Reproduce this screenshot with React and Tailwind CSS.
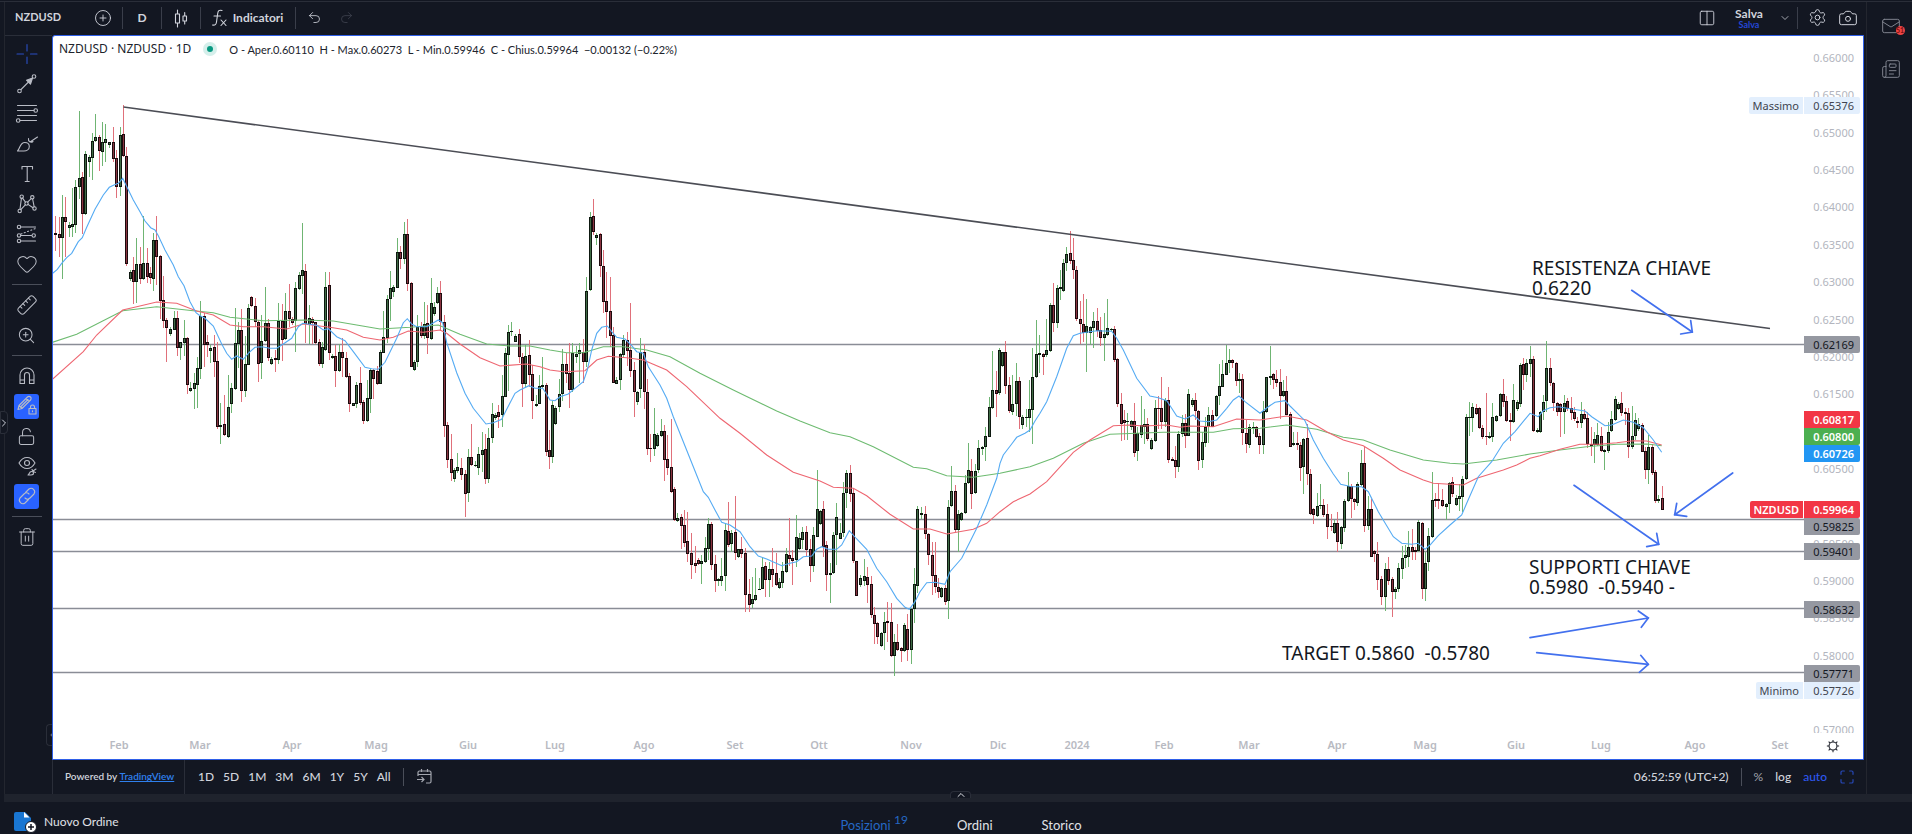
import React from 'react';
import { Heart, ZoomIn, Ruler, LockOpen, Trash2, Undo2, Redo2, Settings, Camera, ChevronDown, ChevronUp, ChevronRight, ChevronLeft, Maximize, Mail, Newspaper, Columns2, CirclePlus } from 'lucide-react';

// plot size in px, everything on the canvas is placed relative to it
const W = 1810;
const H = 723;

// each block: origin on the plot, then candles as "dir x high top bottom low" in thirds of a pixel
const BLOCKS = [
  {
    x: -3, y: 54,
    candles: `r 17 378 428 434 484;r 27 380 432 444 500;g 37 315 382 444 568;r 47 320 382 395 500;g 57 395 405 413 440;g 67 295 402 412 440;g 77 270 290 405 430;g 87 62 264 292 328;r 97 245 262 371 432;g 107 183 192 371 375;g 117 195 201 215 260;g 127 130 152 203 270;g 137 72 140 152 155;r 147 136 140 183 242;g 157 97 155 185 228;g 167 102 147 158 217;g 178 155 157 165 175;r 190 112 157 207 217;r 200 180 204 291 325;g 210 112 135 291 317;r 220 45 132 197 200;r 230 172 197 522 528;g 240 540 545 568 572;r 250 500 540 575 643;g 260 445 522 575 640;r 270 470 521 567 583;g 281 378 519 567 570;r 291 475 519 560 580;r 301 530 550 565 582;g 311 430 450 567 602;r 320 378 450 502 585;r 330 494 499 632 687;r 340 557 629 692 714;r 350 685 690 714 815;g 362 710 716 733 738;g 372 662 685 719 720;r 382 662 685 773 797;g 392 755 757 773 809;g 402 690 745 760 797;r 412 740 745 886 912;g 422 875 895 903 905;g 432 850 880 897 957;g 442 800 833 884 953;g 452 632 678 836 866;r 462 670 678 766 830;r 472 735 755 765 800;g 482 765 773 783 818;r 492 735 772 815 862;r 502 755 812 1010 1018;g 512 940 1006 1011 1062;r 523 915 1003 1035 1038;g 535 855 950 1041 1043;g 545 880 893 941 970;g 555 655 760 896 900;g 565 697 720 762 835;r 575 657 720 903 937;g 585 738 822 903 922;g 595 643 653 824 826;r 605 618 622 647 650;r 615 623 647 697 712;r 625 690 697 822 876;g 635 674 753 819 866;g 645 590 700 753 755;r 655 688 700 805 812;g 665 800 807 821 825;r 676 780 803 810 845;g 686 640 692 810 822;r 696 641 692 750 812;g 706 610 662 748 750;r 717 583 662 688 712;r 727 680 686 700 705;g 737 576 595 692 785;g 747 545 555 597 600;g 757 400 540 557 612;r 767 521 543 703 760;g 777 645 685 704 762;r 787 680 686 700 762;r 797 695 697 760 762;r 807 748 756 823 828;g 817 756 770 823 835;g 827 546 590 780 783;r 837 546 585 788 810;g 847 792 797 805 808;r 857 765 797 842 890;g 867 762 786 842 845;r 877 745 785 805 862;r 889 785 803 860 863;r 899 848 857 942 967;g 909 938 940 948 948;g 920 875 884 942 955;r 930 830 880 939 945;r 941 930 936 993 1002;g 951 870 924 993 995;g 961 835 840 926 970;r 971 837 840 868 928;r 981 828 842 882 885;g 991 780 787 882 883;g 1001 662 740 789 790;g 1011 615 628 744 760;g 1021 543 594 628 694;g 1031 585 590 606 620;g 1041 445 485 593 595;r 1051 468 485 508 537;g 1063 396 432 508 523;r 1072 387 432 582 602;r 1083 575 580 830 832;g 1093 810 815 840 842;g 1103 675 711 815 832;r 1113 695 711 737 745;g 1123 637 703 737 748;r 1133 645 700 745 793;g 1143 565 638 747 750;g 1153 635 652 672 678;g 1163 592 610 640 642;r 1172 572 610 697 722;r 1183 675 695 1007 1040;r 1193 995 1005 1110 1135;r 1203 1033 1107 1148 1172;g 1213 1135 1140 1168 1175;g 1223 1090 1132 1142 1150;r 1235 1105 1133 1155 1170;r 1246 1140 1153 1212 1281;g 1256 1078 1102 1210 1237;r 1265 1003 1102 1124 1128;g 1275 1112 1125 1128 1130;g 1286 1072 1092 1133 1155;g 1296 1025 1080 1095 1145;r 1306 1033 1077 1167 1182;g 1316 1015 1045 1167 1180;g 1326 938 973 1045 1060;g 1336 970 975 985 990;r 1346 945 965 980 1013;g 1356 855 918 975 1012;g 1366 775 790 920 922;g 1376 705 727 794 902;g 1385 696 723 727 737;g 1395 733 737 755 757;r 1408 718 733 802 820;r 1418 790 801 881 950;g 1427 765 797 881 895;r 1438 750 795 855 890;r 1448 825 853 934 988;g 1458 915 943 948 950;g 1468 855 887 942 943;g 1478 800 884 890 893;r 1488 880 885 1085 1097;r 1498 1020 1080 1102 1137`,
    fast: '8,550 22,538 35,520 50,503 65,490 85,455 97,443 110,412 135,358 160,315 178,292 192,285 205,280 218,265 232,293 250,330 270,365 285,393 302,413 315,420 325,437 345,480 370,525 385,560 402,587 420,635 438,668 450,677 465,685 490,708 515,762 530,790 545,808 560,798 580,808 597,788 615,772 635,770 660,775 680,775 700,762 725,745 745,710 758,700 772,702 800,706 820,720 835,716 860,740 885,752 910,785 945,832 965,836 985,838 1005,817 1040,745 1060,698 1072,686 1085,702 1100,710 1130,710 1165,690 1178,698 1190,758 1220,848 1245,910 1270,955 1308,1002 1330,998 1355,988 1370,958 1395,910 1410,900 1437,887 1455,895 1478,895 1488,910 1500,930',
    mid: '8,867 100,785 140,735 218,660 260,650 320,636 380,640 440,663 490,675 540,705 580,710 640,710 710,717 760,702 840,712 890,720 940,742 990,750 1030,742 1075,723 1120,727 1170,720 1190,730 1230,762 1290,803 1350,828 1430,822 1470,830 1500,840',
    slow: '8,757 80,733 218,662 320,650 430,662 490,668 540,682 640,692 760,690 850,693 920,705 990,717 1080,712 1165,705 1230,733 1310,762 1380,768 1440,768 1500,780',
  },
  {
    x: 447, y: 144,
    candles: `g 158 662 676 830 848;g 167 677 684 732 735;g 178 598 642 680 697;g 188 507 552 642 662;r 198 518 552 582 608;r 208 488 580 630 685;g 218 488 518 630 635;g 229 498 522 530 550;g 239 490 510 523 610;r 250 478 515 545 608;g 260 290 333 545 562;g 271 97 110 330 332;r 281 58 108 156 165;g 290 158 166 174 195;r 300 158 162 258 290;r 310 210 257 365 400;r 320 275 362 395 475;r 330 290 392 467 500;r 340 440 465 609 610;g 350 590 600 611 613;g 361 518 522 601 630;g 371 465 480 525 530;r 381 455 481 514 558;r 391 368 510 573 590;r 403 547 570 636 711;g 412 632 636 665 675;g 422 475 517 628 655;r 432 492 517 637 687;r 442 598 636 808 825;r 452 762 804 808 846;g 463 683 763 808 827;g 473 760 765 797 800;g 483 718 752 769 772;r 493 734 752 840 902;r 503 765 837 863 886;r 513 716 860 936 940;r 523 922 927 1020 1022;g 533 1000 1014 1022 1025;r 543 1002 1011 1038 1107;r 553 990 1034 1088 1100;r 563 995 1083 1122 1145;r 575 1060 1118 1155 1198;r 585 1097 1150 1158 1180;r 595 1135 1140 1152 1155;g 605 1125 1143 1153 1213;g 616 1070 1105 1145 1148;g 626 1015 1033 1108 1140;r 635 1025 1033 1155 1170;r 645 1125 1152 1202 1235;g 655 1195 1198 1203 1218;g 665 1135 1187 1202 1218;g 675 1030 1050 1188 1232;r 685 967 1052 1096 1100;g 695 1050 1060 1093 1115;r 705 947 1057 1118 1140;g 715 1107 1107 1132 1135;r 725 1070 1106 1121 1135;r 735 1105 1118 1245 1295;r 747 1197 1243 1274 1296;g 757 1190 1258 1272 1285;g 767 1165 1245 1260 1262;g 778 1195 1226 1228 1230;g 788 1130 1161 1227 1228;r 797 1145 1158 1201 1250;g 808 1145 1166 1200 1250;r 818 1105 1167 1184 1220;r 828 1120 1180 1215 1218;g 838 1195 1205 1225 1228;g 848 1145 1172 1208 1225;g 858 1105 1122 1176 1178;r 868 1015 1124 1136 1158;r 878 1110 1133 1142 1216;g 888 1005 1072 1140 1162;g 898 1060 1074 1107 1110;g 908 1040 1056 1080 1108;r 920 1038 1056 1110 1130;r 931 1078 1107 1158 1205;g 941 1040 1066 1158 1175;g 951 870 988 1070 1072;g 960 990 993 1033 1035;r 970 962 987 1100 1130;r 980 1082 1095 1185 1233;g 990 1150 1180 1184 1270;g 1000 1055 1064 1180 1182;g 1010 970 1011 1065 1155;g 1020 1030 1058 1077 1078;g 1030 905 938 1058 1072;g 1040 870 878 940 985;r 1050 855 880 942 965;r 1060 925 940 1144 1148;r 1070 1142 1144 1247 1248;g 1081 1185 1195 1216 1220;g 1093 1138 1188 1203 1218;r 1103 1160 1190 1216 1270;r 1113 1187 1213 1305 1313;r 1123 1280 1305 1332 1392;r 1133 1325 1330 1370 1392;g 1143 1355 1360 1397 1400;g 1153 1295 1325 1360 1410;r 1162 1265 1323 1328 1385;r 1173 1270 1325 1428 1430;g 1183 1362 1387 1428 1488;r 1193 1332 1387 1410 1414;r 1203 1400 1405 1413 1447;g 1213 1330 1335 1413 1415;r 1222 1302 1347 1411 1442;g 1233 1285 1288 1411 1452;g 1243 1165 1213 1288 1330;g 1253 978 987 1217 1240;g 1264 980 1000 1004 1017;r 1275 978 1002 1063 1078;r 1286 1058 1062 1126 1155;r 1296 1085 1125 1188 1245;r 1306 1085 1186 1222 1238;r 1316 1195 1220 1235 1255;g 1325 1220 1225 1250 1255;r 1335 1215 1225 1265 1275;g 1345 960 980 1264 1318;g 1355 858 933 978 980;r 1366 915 933 1050 1055;g 1376 990 1003 1050 1115;g 1385 995 1000 1020 1023;g 1395 885 908 1000 1002;g 1405 788 870 908 912;r 1415 838 873 941 987;g 1425 853 873 940 942;g 1436 780 803 870 880;g 1447 797 800 808 825;g 1457 742 768 802 842;g 1467 650 682 770 772;g 1478 513 630 684 686;r 1488 572 631 641 711;g 1498 505 510 640 645`,
    fast: '150,660 165,662 180,650 205,642 225,625 250,605 262,570 275,510 290,460 305,442 322,438 335,455 350,472 375,477 395,497 410,515 430,520 445,560 480,615 500,655 520,710 550,785 580,860 610,935 625,952 645,990 665,1027 690,1035 720,1055 750,1100 775,1128 800,1137 845,1157 870,1150 890,1145 910,1130 935,1128 950,1108 965,1100 985,1108 1010,1108 1025,1095 1048,1052 1070,1077 1100,1108 1130,1165 1160,1205 1190,1255 1215,1282 1228,1288 1245,1265 1260,1235 1280,1208 1305,1207 1335,1213 1350,1175 1385,1135 1410,1085 1430,1045 1460,975 1490,895 1500,850',
    mid: '150,570 190,575 255,572 290,540 325,529 380,533 430,540 500,570 560,620 660,715 720,760 800,825 880,877 960,903 1000,922 1060,925 1100,947 1170,1003 1240,1047 1290,1047 1340,1062 1420,1048 1460,1030 1500,995',
    slow: '150,510 200,518 250,518 310,500 370,500 440,510 510,530 600,580 700,630 830,693 900,723 990,758 1050,770 1120,800 1240,862 1280,866 1340,887 1420,892 1500,880',
  },
  {
    x: 897, y: 184,
    candles: `g 157 395 397 437 440;r 167 363 396 497 522;r 178 470 494 572 578;g 188 465 551 575 585;g 198 430 483 553 588;r 208 470 484 591 628;g 218 585 592 614 627;g 228 567 592 594 622;g 238 480 568 593 635;g 248 383 471 570 672;g 258 300 402 472 475;g 269 345 398 404 460;r 280 398 401 412 465;g 290 298 391 405 410;g 300 250 255 392 395;r 311 190 256 308 335;g 321 195 205 308 325;g 331 150 202 206 240;g 341 118 128 214 216;g 350 82 101 130 152;r 361 33 100 122 133;r 371 55 120 150 177;r 380 137 150 298 302;r 391 242 296 313 372;r 401 222 311 340 365;g 410 237 318 340 455;g 420 318 322 340 375;g 431 277 303 323 385;r 442 263 303 332 350;r 452 290 330 355 377;g 463 280 342 355 422;g 473 237 325 345 348;g 483 323 327 331 333;r 493 318 328 420 425;r 503 415 418 552 560;r 513 520 551 612 662;r 523 570 600 610 660;g 533 578 602 606 660;g 543 600 604 622 630;r 554 550 603 698 710;g 563 622 640 694 722;g 573 528 616 644 655;g 584 567 612 620 672;r 593 595 613 658 662;g 603 655 660 688 690;g 616 540 564 662 667;r 626 527 563 567 627;r 635 472 565 606 628;g 646 535 541 605 622;r 656 500 540 719 730;r 666 712 716 722 722;r 676 678 721 740 775;g 686 632 641 740 755;g 696 585 610 642 650;r 706 583 610 647 685;g 716 506 522 647 648;g 726 535 541 555 560;r 736 520 540 573 600;r 746 570 572 722 750;g 756 635 665 720 745;g 766 592 622 668 682;g 776 560 584 622 668;r 786 570 586 620 622;g 798 525 529 588 592;g 808 433 499 528 555;g 818 420 462 500 502;g 828 375 428 464 465;g 838 387 420 430 460;r 848 417 420 430 443;r 858 425 428 482 497;g 868 460 477 482 520;r 878 463 477 640 675;r 889 600 638 673 700;g 899 612 622 675 685;g 909 607 621 625 642;r 919 618 620 650 655;r 929 640 648 676 702;g 939 543 574 674 703;g 949 470 472 575 578;g 961 377 468 473 495;r 970 458 462 480 507;r 980 450 478 488 502;r 991 448 485 527 598;g 1001 480 512 527 530;r 1010 467 513 584 586;r 1021 577 583 680 682;g 1031 635 668 675 678;r 1041 635 669 675 690;r 1051 665 674 744 782;g 1061 655 656 742 822;r 1071 612 654 763 795;r 1081 747 761 882 885;r 1091 865 868 886 912;g 1101 820 857 888 890;g 1111 792 855 858 868;r 1121 838 854 884 890;r 1132 852 881 920 957;r 1143 882 917 922 932;g 1153 900 908 940 943;r 1163 877 908 966 995;g 1173 918 922 973 987;g 1184 838 843 924 935;g 1194 757 798 843 846;r 1204 793 798 836 893;r 1214 835 837 847 870;g 1223 785 792 848 858;g 1233 690 730 795 797;r 1244 680 730 918 937;g 1254 828 867 918 930;r 1264 838 868 1010 1012;r 1274 990 994 1002 1025;r 1283 965 1001 1080 1110;r 1293 1068 1078 1132 1155;g 1307 1030 1047 1132 1172;r 1316 1012 1048 1082 1095;r 1326 1070 1078 1115 1190;g 1336 1100 1106 1117 1138;g 1346 1030 1045 1108 1115;g 1356 977 1015 1047 1078;g 1366 975 1006 1015 1045;g 1376 932 982 1012 1042;r 1386 928 980 995 1020;r 1396 980 990 996 1020;g 1406 900 906 993 995;r 1416 905 908 1108 1138;g 1426 995 1030 1108 1142;g 1436 925 948 1025 1052;g 1446 757 840 950 955;r 1456 820 837 842 862;r 1466 790 838 843 868;r 1478 808 840 857 862;g 1488 850 852 860 900;g 1498 785 788 853 880`,
    fast: '150,730 160,705 185,672 200,652 225,640 240,630 255,603 270,580 290,545 320,470 350,385 370,347 390,340 410,337 440,332 485,334 500,355 520,390 560,475 600,528 625,533 650,542 665,565 680,588 705,597 730,585 750,603 775,605 800,600 830,565 850,540 867,528 885,545 930,580 955,560 975,547 1005,542 1020,558 1065,602 1090,660 1120,715 1150,762 1172,793 1205,800 1235,800 1255,815 1285,875 1330,950 1355,970 1385,973 1405,970 1425,988 1440,975 1465,947 1500,915',
    mid: '150,875 190,845 240,822 290,785 370,697 420,660 490,617 540,615 580,618 650,615 690,622 720,618 790,620 860,597 930,600 1010,588 1070,600 1130,635 1180,660 1240,677 1300,715 1350,750 1420,780 1450,790 1500,793',
    slow: '150,760 240,740 310,715 400,670 480,643 560,640 640,637 790,637 850,626 930,625 1010,615 1100,628 1180,652 1240,660 1320,690 1420,720 1500,730',
  },
  {
    x: 1347, y: 204,
    candles: `r 158 712 727 762 772;g 168 765 773 795 798;g 178 733 768 778 812;g 188 707 716 770 815;g 198 522 532 717 720;g 208 487 532 535 588;g 218 488 502 533 575;r 228 492 503 522 525;r 238 500 503 565 567;r 248 555 563 592 598;r 258 460 588 592 615;g 269 575 588 595 598;g 278 490 531 592 605;g 288 525 527 543 545;g 302 458 463 527 530;r 310 418 462 485 500;r 320 468 482 542 545;r 330 520 540 545 602;g 341 432 480 545 548;g 351 480 485 508 512;g 361 370 376 491 500;r 370 355 372 405 450;g 380 358 370 405 425;g 391 318 357 372 412;r 401 347 358 572 575;g 411 565 569 575 578;g 421 512 515 575 578;g 431 465 485 515 540;g 440 303 385 482 515;r 451 355 385 430 438;r 460 425 428 488 513;r 472 487 489 515 527;r 482 490 491 515 590;g 492 465 488 515 582;r 502 475 483 507 512;r 513 470 505 520 540;r 523 502 517 538 542;r 533 530 543 550 565;g 543 487 522 550 565;r 553 507 522 538 540;r 563 515 535 613 625;r 573 560 612 617 648;g 583 575 598 615 670;g 593 548 585 615 618;r 604 560 587 632 637;g 614 628 630 636 690;g 624 545 576 632 638;g 634 512 538 572 575;g 645 468 478 540 542;g 655 485 492 507 510;r 665 457 488 518 528;r 675 505 517 522 555;r 686 505 520 622 655;g 696 497 588 622 628;g 706 518 540 588 600;g 716 535 552 568 572;r 726 548 555 635 637;r 736 622 633 690 718;g 746 585 622 690 732;r 756 612 622 700 705;r 766 690 697 782 790;g 776 765 778 783 788;r 786 737 775 810 810`,
    fast: '150,855 185,825 200,790 235,710 275,665 310,610 345,575 390,520 415,530 430,512 450,503 475,500 515,507 555,513 575,530 615,557 635,555 670,540 700,547 730,563 760,600 785,637',
    mid: '150,733 190,735 230,715 310,690 350,675 390,655 420,647 480,628 540,613 600,613 650,608 700,602 740,603 785,615',
    slow: '150,670 190,672 290,660 390,642 480,630 560,620 650,613 740,612 785,617',
  },
];

// "x,y x,y" in block units -> plot points
const place = (block, pts) =>
  pts.split(' ').map((p) => {
    const [x, y] = p.split(',').map(Number);
    return `${(block.x + x / 3).toFixed(1)},${(block.y + y / 3).toFixed(1)}`;
  }).join(' ');

const series = (key) => BLOCKS.map((b) => place(b, b[key])).join(' ');

const CANDLES = BLOCKS.flatMap((b) =>
  b.candles.split(';').map((row) => {
    const [dir, ...n] = row.split(' ');
    const [x, high, top, bottom, low] = n.map(Number);
    return {
      up: dir === 'g',
      x: Math.round(b.x + x / 3 - 0.5),
      high: Math.round(b.y + high / 3),
      top: Math.round(b.y + top / 3),
      bottom: Math.round(b.y + bottom / 3),
      low: Math.round(b.y + low / 3),
    };
  })
);

const LEVELS = [308, 483, 515, 572, 636];

const ARROWS = [
  ['695,151 877,276', '842,282 877,276 872,242'],
  ['522,736 776,913', '740,920 776,913 770,880'],
  ['998,699 824,824', '830,790 824,824 860,829'],
  ['390,1193 745,1134', '715,1113 745,1134 724,1162'],
  ['410,1238 745,1273', '722,1246 745,1273 718,1297'],
];

const NOTES = [
  { x: 1479, y: 222, lines: ['RESISTENZA CHIAVE', '0.6220'] },
  { x: 1476, y: 521, lines: ['SUPPORTI CHIAVE', '0.5980  -0.5940 -'] },
  { x: 1229, y: 607, lines: ['TARGET 0.5860  -0.5780'] },
];

const MONTHS = [
  ['Feb', 66], ['Mar', 147], ['Apr', 239], ['Mag', 323], ['Giu', 415], ['Lug', 502], ['Ago', 591], ['Set', 682],
  ['Ott', 766], ['Nov', 858], ['Dic', 945], ['2024', 1024], ['Feb', 1111], ['Mar', 1196], ['Apr', 1284],
  ['Mag', 1372], ['Giu', 1463], ['Lug', 1548], ['Ago', 1642], ['Set', 1727],
];

const PRICES = Array.from({ length: 19 }, (_, i) => (0.66 - i * 0.005).toFixed(5));

const TAGS = [
  { y: 61, price: '0.65376', name: 'Massimo', style: 'bg-[#e3effd] text-[#40444f]' },
  { y: 300, price: '0.62169', style: 'bg-[#9598a1] text-[#131722]' },
  { y: 375, price: '0.60817', style: 'bg-[#f23645] text-white font-semibold' },
  { y: 409, price: '0.60726', style: 'bg-[#2196f3] text-white font-semibold' },
  { y: 392, price: '0.60800', style: 'bg-[#4caf50] text-white font-semibold' },
  { y: 482, price: '0.59825', style: 'bg-[#9598a1] text-[#131722]' },
  { y: 465, price: '0.59964', name: 'NZDUSD', style: 'bg-[#f23645] text-white font-semibold' },
  { y: 507, price: '0.59401', style: 'bg-[#9598a1] text-[#131722]' },
  { y: 565, price: '0.58632', style: 'bg-[#9598a1] text-[#131722]' },
  { y: 629, price: '0.57771', style: 'bg-[#9598a1] text-[#131722]' },
  { y: 646, price: '0.57726', name: 'Minimo', style: 'bg-[#e3effd] text-[#40444f]' },
];

const pctX = (x) => `${(x / W) * 100}%`;
const pctY = (y) => `${(y / H) * 100}%`;

const Glyph = ({ children, className = '' }) => (
  <svg viewBox="0 0 30 30" className={`w-[30px] h-[30px] shrink-0 ${className}`} fill="none" stroke="currentColor" strokeWidth="1.1" strokeLinecap="round" strokeLinejoin="round">
    {children}
  </svg>
);

const TOOLS = [
  [
    { name: 'Cursore', icon: <Glyph className="text-[#2a4fc4]"><path d="M15 5.5v6.5M15 18v6.5M5 15h6.5M18.5 15H25" /></Glyph> },
    { name: 'Linea di tendenza', icon: <Glyph><circle cx="7.5" cy="22" r="1.8" /><circle cx="22" cy="7.5" r="1.8" /><path d="M9 20.5 17 12.5" /><path d="M20.5 9 14.5 11.2 18.5 15.2Z" fill="currentColor" /></Glyph> },
    { name: 'Fibonacci', icon: <Glyph><path d="M5.5 6.5h19M5.5 11.5H22M5.5 16.5h19M8 21.5h16.5" /><circle cx="23.7" cy="11.5" r="1.8" /><circle cx="6.2" cy="21.5" r="1.8" /></Glyph> },
    { name: 'Pennello', icon: <Glyph><path d="M5.5 22c2.5-2 2.2-8.5 7.3-8.5 2.7 0 4.5 1.6 4.5 4 0 3-2.7 4.5-5.3 4.5Z" /><path d="M16.5 9.5c-.5 2.5 2 5 4.5 3M18 13 25.5 8" /></Glyph> },
    { name: 'Testo', icon: <Glyph><path d="M10 10V7.5h10.5V10M15.2 7.5v15M13.2 22.5h4" /></Glyph> },
    { name: 'Pattern', icon: <Glyph><circle cx="9.7" cy="7.7" r="1.7" /><circle cx="20.3" cy="8.3" r="1.7" /><circle cx="7.7" cy="22" r="1.7" /><circle cx="22.5" cy="19.5" r="1.7" /><circle cx="14.5" cy="14.5" r="1.7" /><path d="M9.4 9.4 8 20.3M10.5 9.2 13.5 13.2M15.6 13.2 19.2 9.6M20.6 10 22.2 17.8M16 15.4 21 18.7M13.3 15.8 8.8 20.7" /></Glyph> },
    { name: 'Previsione', icon: <Glyph><circle cx="7" cy="8" r="1.7" /><circle cx="7" cy="16.5" r="1.7" /><circle cx="21.7" cy="16.5" r="1.7" /><circle cx="7" cy="22" r="1.7" /><path d="M9 8h14.5M9 16.5h10.5M9 22h14.5" /><path d="M9 15 23.5 9.5" strokeDasharray="1 2.5" /></Glyph> },
    { name: 'Icone', icon: <Heart className="w-[22px] h-[22px]" strokeWidth={1.1} /> },
  ],
  [
    { name: 'Misura', icon: <Ruler className="w-[22px] h-[22px] -scale-x-100" strokeWidth={1.1} /> },
    { name: 'Zoom', icon: <ZoomIn className="w-[19px] h-[19px]" strokeWidth={1.3} /> },
  ],
  [
    { name: 'Calamita', icon: <Glyph><path d="M8 22.5V14a7 7 0 0 1 14 0v8.5h-4.5V14a2.5 2.5 0 0 0-5 0v8.5ZM8 19h4.5M17.5 19H22" /></Glyph> },
    { name: 'Disegno continuo', active: true, icon: <Glyph><path d="M6 18.5 7 14.5 15.5 6a2 2 0 0 1 3 3L10 17.5ZM7 14.5l3 3M14 7.5l3 3M9 15.5l7-7M17 17.5h7v5.5h-7ZM18.5 17.5V16a2 2 0 0 1 4 0v1.5M20.5 19.7v1" /></Glyph> },
    { name: 'Blocca disegni', icon: <LockOpen className="w-[19px] h-[19px]" strokeWidth={1.3} /> },
    { name: 'Nascondi disegni', icon: <Glyph><path d="M7 12c2-3.5 5-5.5 8-5.5s6 2 8 5.5c-2 3.5-5 5.5-8 5.5S9 15.5 7 12Z" /><circle cx="15" cy="12" r="2.5" /><path d="M16 24c1.5-.5 1-3.5 3.5-3.5 1.5 0 2 1 2 1.8 0 1.4-1.5 1.7-2.5 1.7ZM21 20l3-2M20 18.5c.5 1.5 1 2.5 3.5 3" /></Glyph> },
    { name: 'Sincronizza', active: true, icon: <Glyph><path d="M13.5 11.5 17 8a3.6 3.6 0 0 1 5 5l-4 4a3.6 3.6 0 0 1-5 0M16.5 18.5 13 22a3.6 3.6 0 0 1-5-5l4-4a3.6 3.6 0 0 1 5 0" /></Glyph> },
  ],
  [{ name: 'Elimina', icon: <Trash2 className="w-5 h-5" strokeWidth={1.2} /> }],
];

function Divider() {
  return <span className="w-px h-[22px] bg-[#3a3e4a]" />;
}

function TopBar() {
  return (
    <header className="h-[33px] pb-0.5 flex items-center text-[#d1d4dc] text-xs font-bold">
      <button className="w-[78px] pl-2.5 text-left text-[11px]">NZDUSD</button>
      <button aria-label="Confronta" className="w-[39px] flex justify-center"><CirclePlus className="w-[18px] h-[18px]" strokeWidth={1.2} /></button>
      <Divider />
      <button className="w-[38px]">D</button>
      <Divider />
      <button aria-label="Candele" className="w-[38px] flex justify-center">
        <Glyph><path d="M9.5 11h4v9h-4ZM11.5 7v4M11.5 20v4M17 13h3.5v5H17ZM18.7 9.5V13M18.7 18v3" /></Glyph>
      </button>
      <Divider />
      <button className="w-[94px] flex items-center justify-center">
        <Glyph className="-mr-0.5"><path d="M17 7.5c-3-1-4 .5-4.3 3L11.500 19c-.3 2.500-1.500 3.500-4 3M9 13h6.500M16 17l5 5.500M21 17l-5 5.500" /></Glyph>
        <span className="mr-2">Indicatori</span>
      </button>
      <Divider />
      <button aria-label="Annulla" className="w-9 flex justify-center"><Undo2 className="w-[15px] h-[15px]" strokeWidth={1.3} /></button>
      <button aria-label="Ripeti" className="w-7 flex justify-center text-[#3f434f]"><Redo2 className="w-[15px] h-[15px]" strokeWidth={1.3} /></button>
      <div className="ml-auto flex items-center">
        <button aria-label="Layout" className="w-9 flex justify-center"><Columns2 className="w-[18px] h-[18px]" strokeWidth={1.2} /></button>
        <button className="w-12 flex flex-col items-center leading-[13px]">
          <span>Salva</span>
          <span className="text-[9px] leading-[9px] text-[#2447d8]">Salva</span>
        </button>
        <button aria-label="Altri layout" className="w-6 flex justify-end pr-1.5"><ChevronDown className="w-3 h-3" strokeWidth={1.5} /></button>
        <Divider />
        <button aria-label="Impostazioni" className="w-[38px] flex justify-center"><Settings className="w-[19px] h-[19px]" strokeWidth={1.2} /></button>
        <button aria-label="Istantanea" className="w-7 flex justify-start pl-0.5"><Camera className="w-5 h-5" strokeWidth={1.2} /></button>
      </div>
    </header>
  );
}

function ToolBar() {
  return (
    <nav className="relative w-[47px] shrink-0 border-t border-[#2a2e39] pt-[3px] pr-1 flex flex-col items-center text-[#b9bcc5]">
      {TOOLS.map((group, g) => (
        <React.Fragment key={g}>
          {g > 0 && <span className="w-[30px] h-px my-[5px] bg-[#4a4e59]" />}
          {group.map((tool) => (
            <button key={tool.name} aria-label={tool.name} className="w-[30px] h-[30px] flex items-center justify-center">
              <span className={`w-[25px] h-[25px] flex items-center justify-center rounded-[3px] ${tool.active ? 'bg-[#2962ff]' : ''}`}>
                {tool.icon}
              </span>
            </button>
          ))}
        </React.Fragment>
      ))}
      <button aria-label="Apri pannello oggetti" className="absolute right-0 bottom-12 w-1.5 h-[22px] border border-r-0 border-[#2a2e39] rounded-l-sm flex items-center overflow-hidden">
        <ChevronLeft className="w-2.5 h-2.5 shrink-0" strokeWidth={1.5} />
      </button>
    </nav>
  );
}

function Plot() {
  return (
    <svg viewBox={`0 0 ${W} ${H}`} preserveAspectRatio="none" className="absolute inset-0 w-full h-full" fill="none">
      {LEVELS.map((y) => (
        <path key={y} d={`M0 ${y + 0.5}H1752`} stroke="#8a8d96" strokeWidth="1.6" />
      ))}
      <g shapeRendering="crispEdges">
        {CANDLES.map((c, i) => (
          <g key={i}>
            <rect x={c.x} y={c.high} width="1" height={Math.max(1, c.low - c.high)} fill={c.up ? '#6fb573' : '#e0707a'} />
            <rect x={c.x - 1} y={c.top} width="3" height={Math.max(1, c.bottom - c.top)} fill={c.up ? '#0d180f' : '#1c0a0d'} />
            {c.bottom - c.top > 2 && (
              <rect x={c.x} y={c.top + 1} width="1" height={c.bottom - c.top - 2} fill={c.up ? '#3f6b45' : '#8a3441'} />
            )}
          </g>
        ))}
      </g>
      <polyline points={series('slow')} stroke="#6dbb70" strokeWidth="1.1" />
      <polyline points={series('mid')} stroke="#ee6671" strokeWidth="1.1" />
      <polyline points={series('fast')} stroke="#55abf3" strokeWidth="1.1" />
      <path d="M70.5 71 1717 292.5" stroke="#4b4d55" strokeWidth="1.6" />
      <g stroke="#4270ee" strokeWidth="1.7" strokeLinecap="round">
        {ARROWS.flat().map((pts) => (
          <polyline key={pts} points={place(BLOCKS[3], pts)} />
        ))}
      </g>
    </svg>
  );
}

function Chart() {
  return (
    <div className="relative flex-1 min-h-0 overflow-hidden bg-white border border-[#2f5fe8] rounded-tl-[3px] font-['Noto_Sans',sans-serif]">
      <Plot />

      <div className="relative flex items-center h-[26px] pl-1.5 text-[#20232c] whitespace-pre">
        <span className="text-xs">NZDUSD · NZDUSD · 1D</span>
        <span className="ml-3 w-3.5 h-3.5 rounded-full bg-[#d5efeb] flex items-center justify-center">
          <span className="w-1.5 h-1.5 rounded-full bg-[#089981]" />
        </span>
        <span className="ml-3 pt-0.5 text-[11px] font-['Lato',sans-serif]">O - Aper.0.60110  H - Max.0.60273  L - Min.0.59946  C - Chius.0.59964  −0.00132 (−0.22%)</span>
      </div>

      {NOTES.map((n) => (
        <p key={n.lines[0]} className="absolute whitespace-pre text-[19px] leading-5 text-[#131722]" style={{ left: pctX(n.x), top: pctY(n.y) }}>
          {n.lines.join('\n')}
        </p>
      ))}

      {/* price scale */}
      <div className="absolute right-0 top-0 w-[60px] overflow-hidden" style={{ height: pctY(697) }}>
        {PRICES.map((p, i) => (
          <span key={p} className="absolute right-[9px] -translate-y-1/2 text-[11px] leading-4 text-[#b2b5be]" style={{ top: `${((22 + i * 37.36) / 697) * 100}%` }}>{p}</span>
        ))}
      </div>
      {TAGS.map((t) => (
        <div key={t.price} className="absolute right-[3px] flex gap-px text-[11px] leading-[17px]" style={{ top: pctY(t.y) }}>
          {t.name && <span className={`px-1 rounded-l-xs ${t.style}`}>{t.name}</span>}
          <span className={`w-14 pr-1.5 text-right rounded-r-xs ${t.style}`}>{t.price}</span>
        </div>
      ))}

      {/* time scale */}
      {MONTHS.map(([label, x]) => (
        <span key={x} className="absolute -translate-x-1/2 -translate-y-1/2 text-[11px] leading-4 font-semibold text-[#b8bac2]" style={{ left: pctX(x), top: pctY(709) }}>{label}</span>
      ))}
      <button aria-label="Impostazioni scala" className="absolute right-[23px] bottom-1.5 text-[#20232c]">
        <svg viewBox="0 0 16 16" className="w-3.5 h-3.5" fill="none" stroke="currentColor" strokeWidth="1.2">
          <circle cx="8" cy="8" r="4.5" />
          <path d="M8 1v2.5M8 12.5V15M1 8h2.5M12.5 8H15M3 3l1.8 1.8M11.2 11.2 13 13M13 3l-1.8 1.8M4.8 11.2 3 13" />
        </svg>
      </button>
    </div>
  );
}

function RangeBar() {
  return (
    <div className="h-[34px] shrink-0 flex items-center border-l border-[#2a2e39] text-[#d1d4dc] text-xs font-medium">
      <p className="w-[132px] h-full flex items-center pl-3 border-r border-[#2a2e39] text-[10px] font-semibold whitespace-pre">
        Powered by <a href="#tradingview" className="text-[#2f80ed] underline">TradingView</a>
      </p>
      <div className="flex items-center gap-[9px] pl-[13px]">
        {['1D', '5D', '1M', '3M', '6M', '1Y', '5Y', 'All'].map((r) => <button key={r}>{r}</button>)}
      </div>
      <span className="ml-3 w-px h-[18px] bg-[#4a4e59]" />
      <button aria-label="Vai a" className="ml-3 text-[#a3a6af]">
        <svg viewBox="0 0 18 18" className="w-[18px] h-[18px]" fill="none" stroke="currentColor" strokeWidth="1.2">
          <path d="M2 8V4.5A1.5 1.5 0 0 1 3.500 3h10A1.500 1.500 0 0 1 15 4.500v9a1.500 1.500 0 0 1-1.500 1.500H10M2 6.500h13M5.500 1v3M11.500 1v3M1 11.500h7M5.500 9l2.500 2.500L5.500 14" />
        </svg>
      </button>
      <div className="ml-auto flex items-center pr-[9px]">
        <button className="pr-3">06:52:59 (UTC+2)</button>
        <span className="w-px h-[18px] bg-[#4a4e59]" />
        <button className="pl-3 pr-3 text-[#a3a6af] font-normal">%</button>
        <button className="pr-3">log</button>
        <button className="pr-3 text-[#2e57f0]">auto</button>
        <button aria-label="Schermo intero" className="text-[#2748b8]"><Maximize className="w-4 h-4" strokeWidth={1.8} /></button>
      </div>
    </div>
  );
}

function SideRail() {
  return (
    <aside className="w-[46px] shrink-0 ml-0.5 border-l border-[#23262f] flex flex-col items-center pt-3.5 pl-0.5 gap-[23px] text-[#7f838e]">
      <button aria-label="Messaggi" className="relative">
        <Mail className="w-5 h-5" strokeWidth={1.2} />
        <span className="absolute -right-1 top-2.5 w-[9px] h-[9px] rounded-full bg-[#ef4444] text-[7px] leading-[9px] text-center text-[#7a1010] font-bold">51</span>
      </button>
      <button aria-label="Notizie"><Newspaper className="w-5 h-5" strokeWidth={1.2} /></button>
    </aside>
  );
}

function OrdersPanel() {
  return (
    <footer className="relative h-10 ml-1 shrink-0 border-t-8 border-[#1f232d] text-[#e0e2e7]">
      <button aria-label="Espandi" className="absolute left-1/2 -top-[11px] w-[21px] h-[7px] -ml-2 bg-[#131722] border border-[#2a2e39] border-b-0 rounded-t-sm flex items-center justify-center overflow-hidden">
        <ChevronUp className="w-3 h-3 shrink-0" strokeWidth={2} />
      </button>
      <div className="grid grid-cols-[1fr_auto_1fr] h-8 pl-1.5 overflow-hidden">
        <button className="flex items-center pl-1 pt-2 text-xs justify-self-start">
          <svg viewBox="0 0 24 24" className="w-6 h-6 mr-1.5">
            <path d="M2 2h9l6 6v13H2a2 2 0 0 1-2-2V4a2 2 0 0 1 2-2Z" fill="#1976d2" />
            <path d="M10 2v5.5h5.5Z" fill="#fff" />
            <circle cx="17" cy="17" r="5.5" fill="#fff" stroke="#131722" />
            <path d="M17 14v6M14 17h6" stroke="#131722" strokeWidth="1.5" />
          </svg>
          Nuovo Ordine
        </button>
        <div className="flex items-end gap-[49px] text-[13px] leading-[18px]">
          <button className="text-[#2568c4] whitespace-nowrap">Posizioni <sup className="text-xs">19</sup></button>
          <button>Ordini</button>
          <button>Storico</button>
        </div>
      </div>
    </footer>
  );
}

export default function App() {
  return (
    <div className="h-screen pt-px flex flex-col bg-[#131722] overflow-hidden font-['Lato',sans-serif]">
      <div className="relative flex flex-1 min-h-0 border-t border-[#2a2e39] pl-1">
        <button aria-label="Apri pannello laterale" className="absolute left-0 top-1/2 w-2 h-[23px] mt-[13px] bg-[#131722] border border-[#2a2e39] rounded-r-sm flex items-center justify-center text-[#d1d4dc] z-10">
          <ChevronRight className="w-3 h-3 shrink-0" strokeWidth={2} />
        </button>
        <div className="flex flex-col flex-1 min-w-0 border-l border-[#23262f]">
          <TopBar />
          <div className="flex flex-1 min-h-0">
            <ToolBar />
            <main className="flex flex-col flex-1 min-w-0">
              <Chart />
              <RangeBar />
            </main>
          </div>
        </div>
        <SideRail />
      </div>
      <OrdersPanel />
    </div>
  );
}
